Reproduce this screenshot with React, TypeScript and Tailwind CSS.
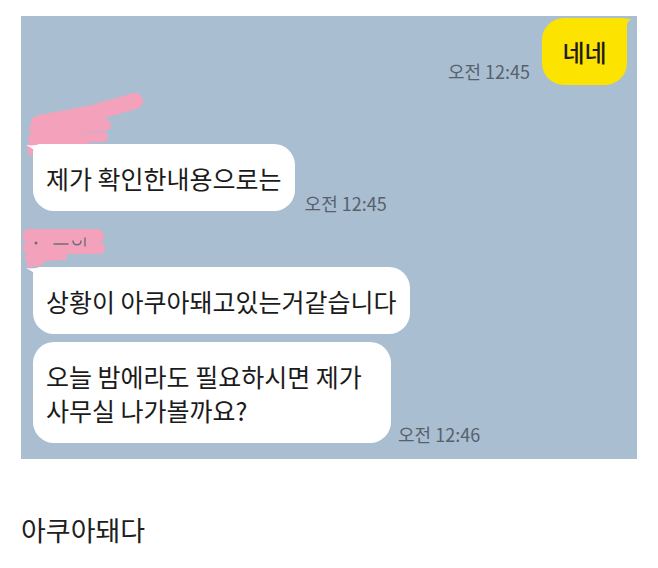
import React from "react";

const font = {
  fontFamily: '"Noto Sans CJK KR", "Noto Sans", sans-serif',
};

function Time({ children }: { children: React.ReactNode }) {
  return (
    <span className="text-[18px] leading-[22px] text-[#57616d] whitespace-nowrap">
      {children}
    </span>
  );
}

function Tail() {
  return (
    <svg
      className="absolute -left-[7px] top-0"
      width="16"
      height="14"
      viewBox="0 0 16 14"
    >
      <path d="M0 1 C5 2 10 1 16 0 L16 14 C12 9 8 5 0 1 Z" fill="#ffffff" />
    </svg>
  );
}

function Bubble({
  children,
  tail,
  className = "",
}: {
  children: React.ReactNode;
  tail?: boolean;
  className?: string;
}) {
  return (
    <div
      className={`relative bg-white rounded-[21px] px-[13px] py-[16.5px] text-[25px] leading-[34px] text-[#1b1b1b] ${
        tail ? "rounded-tl-[8px]" : ""
      } ${className}`}
    >
      {tail && <Tail />}
      {children}
    </div>
  );
}

function Scribble1() {
  return (
    <svg
      className="absolute left-[2px] top-[4px]"
      width="130"
      height="70"
      viewBox="0 0 130 70"
    >
      <g
        stroke="#f4a1bc"
        strokeLinecap="round"
        strokeLinejoin="round"
        fill="none"
      >
        <path d="M112 12 L70 24 L16 34" strokeWidth="16" />
        <path d="M12 40 L82 36" strokeWidth="12" />
        <path d="M10 50 L80 48" strokeWidth="10" />
        <path d="M8 58 L62 57" strokeWidth="8" />
        <path d="M8 64 L26 62" strokeWidth="6" />
      </g>
    </svg>
  );
}

function Scribble2() {
  return (
    <svg
      className="absolute left-[2px] top-[18px]"
      width="100"
      height="50"
      viewBox="0 0 100 50"
    >
      <g stroke="#f4a1bc" strokeLinecap="round" fill="none">
        <path d="M6 7 L74 7" strokeWidth="14" />
        <path d="M6 19 L76 19" strokeWidth="12" />
        <path d="M6 29 L40 27" strokeWidth="8" />
        <path d="M6 36 L18 34" strokeWidth="5" />
      </g>
      <g stroke="#6b6f78" strokeWidth="1.4" fill="none" strokeLinecap="round">
        <circle cx="13" cy="14" r="0.8" fill="#6b6f78" />
        <path d="M31 15 L45 15" />
        <path d="M50 12 C50 17 58 17 58 12" />
        <path d="M62 9 L62 17" />
      </g>
    </svg>
  );
}

export default function App() {
  return (
    <div className="w-[658px] h-[568px] bg-white pt-[16px]" style={font}>
      <div className="ml-[21px] w-[616px] h-[443px] bg-[#aabed2] flex flex-col pl-[12px] pr-[10px]">
        <div className="flex justify-end items-end gap-[12px] pt-[2px]">
          <div className="mb-[1px]">
            <Time>오전 12:45</Time>
          </div>
          <div className="relative w-[85px] h-[67px] bg-[#fde300] rounded-[22px] rounded-tr-[6px] flex items-center justify-center text-[24px] font-medium text-[#1d1d1d]">
            <svg
              className="absolute -right-[4px] top-0"
              width="12"
              height="14"
              viewBox="0 0 12 14"
            >
              <path d="M0 0 L12 1 C8 4 6 9 4 14 L0 14 Z" fill="#fde300" />
            </svg>
            네네
          </div>
        </div>

        <div className="relative h-[59px] -ml-[12px]">
          <Scribble1 />
        </div>

        <div className="flex items-end gap-[10px]">
          <Bubble tail>제가 확인한내용으로는</Bubble>
          <div className="-mb-[5px]">
            <Time>오전 12:45</Time>
          </div>
        </div>

        <div className="relative h-[56px] -ml-[12px] z-10">
          <Scribble2 />
        </div>

        <div className="flex items-end">
          <Bubble tail>상황이 아쿠아돼고있는거같습니다</Bubble>
        </div>

        <div className="flex items-end gap-[7px] mt-[8px]">
          <Bubble className="w-[358px]">
            오늘 밤에라도 필요하시면 제가
            <br />
            사무실 나가볼까요?
          </Bubble>
          <div className="-mb-[4px]">
            <Time>오전 12:46</Time>
          </div>
        </div>
      </div>

      <div className="ml-[21px] mt-[51px] text-[27px] leading-[40px] text-[#202020]">
        아쿠아돼다
      </div>
    </div>
  );
}
